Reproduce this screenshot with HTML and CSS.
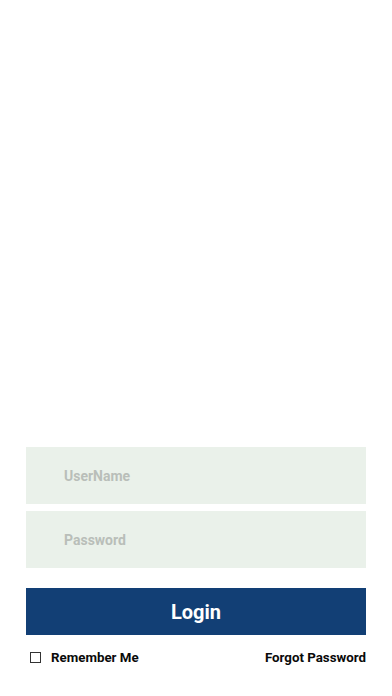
FILE: index.html
```html
<!DOCTYPE html>
<html>
<head>
<meta charset="utf-8">
<link rel="stylesheet" href="styles.css">
</head>
<body>
<div class="page">
  <form class="login-form">
    <div class="field"><input class="input" type="text" placeholder="UserName"></div>
    <div class="field"><input class="input" type="password" placeholder="Password"></div>
    <button class="login-btn" type="button">Login</button>
    <div class="options">
      <label class="remember"><span class="box"></span><span>Remember Me</span></label>
      <span class="forgot">Forgot Password</span>
    </div>
  </form>
</div>
</body>
</html>
```
FILE: styles.css
```css
* { box-sizing: border-box; }
html, body { margin: 0; padding: 0; background: #fff; }
body { font-family: Roboto, "Liberation Sans", sans-serif; width: 392px; height: 696px; overflow: hidden; }
.page { height: 696px; display: flex; flex-direction: column; justify-content: flex-end; padding: 0 26px 31px 26px; }
.login-form { display: flex; flex-direction: column; margin: 0; }
.field { height: 57px; background: #eaf1ea; margin-bottom: 7px; display: flex; align-items: center; }
.field + .field { margin-bottom: 20px; }
.input { border: none; background: transparent; outline: none; width: 100%; height: 100%; padding: 0 0 0 38px; font-family: Roboto, "Liberation Sans", sans-serif; font-weight: 700; font-size: 14px; color: #333; }
.input::placeholder { color: #b9beb9; }
.login-btn { height: 47px; border: none; background: #123f75; color: #fff; font-family: Roboto, "Liberation Sans", sans-serif; font-weight: 700; font-size: 20px; padding: 0; margin: 0; }
.options { display: flex; justify-content: space-between; align-items: center; margin-top: 15px; font-size: 13.3px; font-weight: 700; color: #0a0a0a; }
.remember { display: flex; align-items: center; gap: 10px; padding-left: 4px; }
.box { width: 11px; height: 11px; border: 1px solid #333; background: #fff; }
```
